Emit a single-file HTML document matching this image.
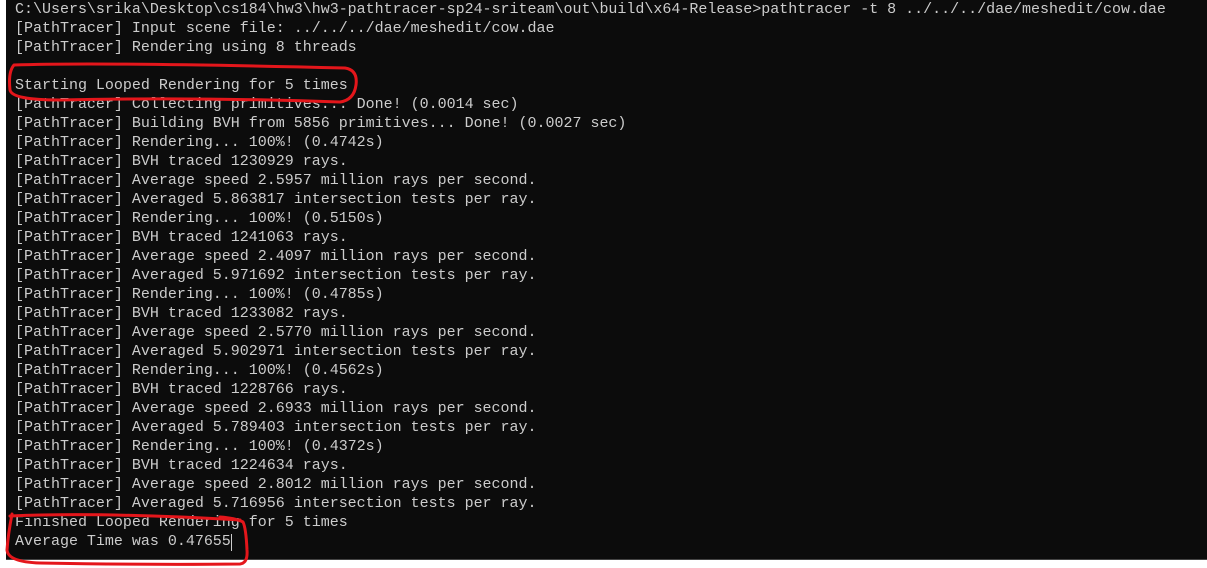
<!DOCTYPE html>
<html><head><style>
html,body{margin:0;padding:0;background:#fff;width:1207px;height:568px;overflow:hidden}
#t{position:absolute;left:6px;top:0;width:1201px;height:559px;background:#0c0c0c;border-bottom:1px solid #444}
pre{position:absolute;left:15px;top:0px;margin:0;font-family:"Liberation Mono",monospace;font-size:15px;letter-spacing:-0.01px;line-height:19px;color:#cccccc;white-space:pre}
svg{position:absolute;left:0;top:0}
</style></head><body>
<div id="t"></div>
<pre>C:\Users\srika\Desktop\cs184\hw3\hw3-pathtracer-sp24-sriteam\out\build\x64-Release>pathtracer -t 8 ../../../dae/meshedit/cow.dae
[PathTracer] Input scene file: ../../../dae/meshedit/cow.dae
[PathTracer] Rendering using 8 threads

Starting Looped Rendering for 5 times
[PathTracer] Collecting primitives... Done! (0.0014 sec)
[PathTracer] Building BVH from 5856 primitives... Done! (0.0027 sec)
[PathTracer] Rendering... 100%! (0.4742s)
[PathTracer] BVH traced 1230929 rays.
[PathTracer] Average speed 2.5957 million rays per second.
[PathTracer] Averaged 5.863817 intersection tests per ray.
[PathTracer] Rendering... 100%! (0.5150s)
[PathTracer] BVH traced 1241063 rays.
[PathTracer] Average speed 2.4097 million rays per second.
[PathTracer] Averaged 5.971692 intersection tests per ray.
[PathTracer] Rendering... 100%! (0.4785s)
[PathTracer] BVH traced 1233082 rays.
[PathTracer] Average speed 2.5770 million rays per second.
[PathTracer] Averaged 5.902971 intersection tests per ray.
[PathTracer] Rendering... 100%! (0.4562s)
[PathTracer] BVH traced 1228766 rays.
[PathTracer] Average speed 2.6933 million rays per second.
[PathTracer] Averaged 5.789403 intersection tests per ray.
[PathTracer] Rendering... 100%! (0.4372s)
[PathTracer] BVH traced 1224634 rays.
[PathTracer] Average speed 2.8012 million rays per second.
[PathTracer] Averaged 5.716956 intersection tests per ray.
Finished Looped Rendering for 5 times
Average Time was 0.47655</pre>
<div style="position:absolute;left:231px;top:534px;width:1px;height:17px;background:#ccc"></div>
<svg width="1207" height="568">
<path d="M14 65 Q100 62 345 68 Q358 70 356 85 Q354 100 340 102 Q200 97 60 100 Q12 100 10 90 Q8 72 14 65 Z" fill="none" stroke="#e4161b" stroke-width="3" stroke-linejoin="round"/>
<path d="M12 514 Q8 535 7 550 Q8 562 40 563 Q150 565 240 564 Q248 563 247 550 Q246 528 243 522 Q235 518 220 517" fill="none" stroke="#e4161b" stroke-width="3" stroke-linecap="round"/>
<path d="M10 516 Q100 512 240 520" fill="none" stroke="#e4161b" stroke-width="3" stroke-linecap="round"/>
</svg>
</body></html>
